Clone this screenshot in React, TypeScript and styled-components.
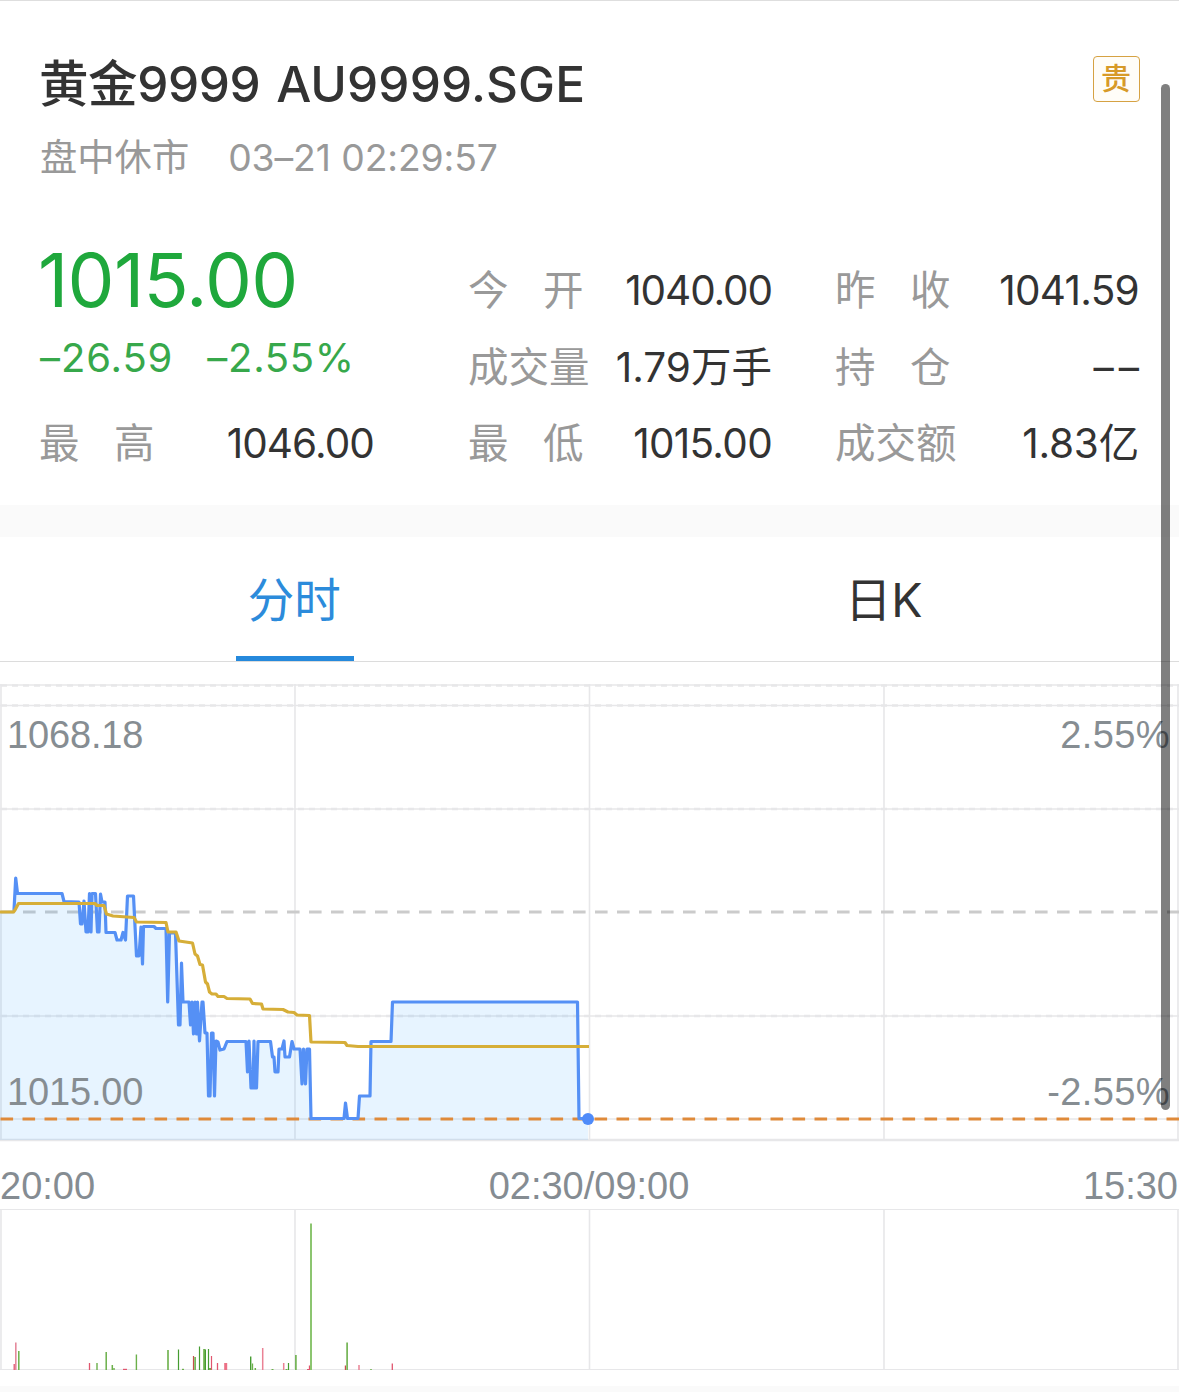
import React from "react";
import styled, { createGlobalStyle } from "styled-components";

const GlobalStyle = createGlobalStyle`
  * { box-sizing: border-box; }
  html, body { margin: 0; padding: 0; background: #fff; overflow: hidden; }
`;

const Page = styled.main`
  position: relative;
  width: 1179px;
  height: 1392px;
  overflow: hidden;
  background: #fff;
  border-top: 1px solid #dedede;
  font-family: Inter, "Noto Sans CJK SC", sans-serif;
  color: #333;
  display: flex;
  flex-direction: column;
`;

const Header = styled.header`
  display: flex;
  justify-content: space-between;
  align-items: flex-start;
  height: 219px;
  padding: 55px 39px 0 40px;
`;

const Title = styled.h1`
  margin: 0 0 0 -1px;
  height: 56px;
  line-height: 57px;
  font-size: 49.5px;
  font-weight: 500;
  letter-spacing: -0.4px;
  white-space: pre;
`;

const Ticker = styled.span`
  margin-left: 3px;
  letter-spacing: 0.1px;
`;

const Status = styled.div`
  display: flex;
  gap: 39px;
  margin-top: 18px;
  height: 56px;
  line-height: 56px;
  font-size: 37.3px;
  color: #999;
  white-space: pre;
`;

const StatusTime = styled.span`
  letter-spacing: -0.1px;
`;

const Badge = styled.span`
  display: flex;
  align-items: center;
  justify-content: center;
  width: 47px;
  height: 46px;
  padding: 0 1px 2px 0;
  border: 1.5px solid #d6a243;
  border-radius: 4px;
  background: #fffdf8;
  color: #d79a28;
  font-size: 30px;
  font-weight: 500;
  line-height: 1;
`;

const Quote = styled.section`
  display: grid;
  grid-template-columns: 429px 367px 303px;
  height: 285px;
  padding: 33px 39px 0 40px;
`;

const Column = styled.div<{ $width: number }>`
  display: flex;
  flex-direction: column;
  width: ${(p) => p.$width}px;
`;

const Price = styled.div`
  height: 56px;
  line-height: 54px;
  margin-left: -2px;
  font-size: 74.5px;
  letter-spacing: -0.7px;
  color: #1fa83c;
`;

const Changes = styled.div`
  display: flex;
  gap: 34px;
  height: 50px;
  line-height: 50px;
  margin-top: 24px;
  margin-bottom: 23px;
  font-size: 40px;
  color: #37a84b;
`;

const Change = styled.span<{ $track: number }>`
  letter-spacing: ${(p) => p.$track}px;
`;

const Stat = styled.div`
  display: flex;
  justify-content: space-between;
  height: 76.5px;
  line-height: 76.5px;
  font-size: 40.5px;
`;

const StatLabel = styled.span<{ $spread: boolean }>`
  color: #999;
  margin-left: -1px;
  letter-spacing: ${(p) => (p.$spread ? "34.5px" : "0")};
`;

const StatValue = styled.span<{ $track: number }>`
  letter-spacing: ${(p) => p.$track}px;
  margin-right: ${(p) => Math.min(0, -p.$track)}px;
`;

const Divider = styled.div<{ $height: number }>`
  flex: none;
  height: ${(p) => p.$height}px;
  background: #fafafa;
`;

const Tabs = styled.nav`
  display: grid;
  grid-template-columns: 1fr 1fr;
  height: 125px;
  border-bottom: 1px solid #dcdcdc;
`;

const Tab = styled.button<{ $active?: boolean }>`
  display: flex;
  justify-content: center;
  background: none;
  border: 0;
  padding: 0;
  font: inherit;
  font-size: 46.5px;
  line-height: 126px;
  color: ${(p) => (p.$active ? "#2c8bdb" : "#333")};

  span {
    display: block;
    min-width: 118px;
    height: 124px;
    padding-right: 1px;
    border-bottom: 5px solid ${(p) => (p.$active ? "#2589dc" : "transparent")};
  }
`;

const Chart = styled.svg`
  display: block;
  flex: none;
  font-family: "Liberation Sans", Arial, sans-serif;
  font-size: 38px;
`;

const Axis = styled.div`
  display: grid;
  grid-template-columns: 1fr auto 1fr;
  height: 48px;
  padding-right: 1px;
  line-height: 53px;
  font-family: "Liberation Sans", Arial, sans-serif;
  font-size: 38px;
  color: #858c92;

  span:last-child { text-align: right; }
`;

const Gap = styled.div`
  flex: none;
  height: 15px;
`;

const Scrollbar = styled.div`
  position: absolute;
  right: 9px;
  top: 83px;
  width: 9px;
  height: 1026px;
  border-radius: 5px;
  background: rgba(0, 0, 0, 0.5);
`;

type StatItem = { label: string; value: string; track: number };

const high: StatItem = { label: "最高", value: "1046.00", track: -0.9 };
const middle: StatItem[] = [
  { label: "今开", value: "1040.00", track: -1.1 },
  { label: "成交量", value: "1.79万手", track: 0 },
  { label: "最低", value: "1015.00", track: -0.7 },
];
const right: StatItem[] = [
  { label: "昨收", value: "1041.59", track: -0.7 },
  { label: "持仓", value: "––", track: 5 },
  { label: "成交额", value: "1.83亿", track: -0.2 },
];

const priceLine =
  "14,910 15.7,878 17.5,893.5 62,893.5 64,901.5 79,902 80.5,924 82,924 84,901 86,932 88,932 89.5,893.5 91,932 92,893.5 95.5,893.5 97.5,932 99,932 100.5,894 102,902 105,902 106,932.5 115,932.5 117,940 121,940 123,932.5 125.5,940 127.5,896 133.5,896 136.5,956 139,956 141,927 142.5,964 143.5,926.5 154,926.5 156,928.5 166,928.5 167.7,1002 169.5,933 175.5,933 178.5,1025 180,1025 181.5,963 183,1002 189,1002 190.5,1025 192,1002 193.5,1034 195,1002 196.5,1034 197.5,1002 199.5,1041 202,1002 203,1002 205,1033 207,1033 208.5,1096 210,1096 211.5,1033 213,1033 214.5,1096 216,1041 218,1042 220,1050 224,1049 227,1041.5 246,1041.5 247.5,1072 249,1041 251,1088 253,1088 254,1041 255,1088 256.5,1088 258,1041.5 270.5,1041.5 272.5,1057 274,1057 275,1072 278,1072 279,1049 282,1049 284,1041 285,1057 289.5,1057 292,1041.5 294,1049 300,1049 302,1084 303.5,1049 305.5,1084 307,1049 309.5,1049 311,1118.5 344,1118.5 345.5,1103 347.5,1118.5 358,1118.5 359.5,1096 370,1096 371,1041.5 391,1041.5 392.5,1002 577.5,1002 579,1118.5 588,1118.5";

const averageLine =
  "0,912 13.5,912 15,910 18.5,903.5 95,903.5 97,905.5 104,905.5 106.5,914 113,916 134,917.5 136.5,922 166,922.5 168,932 176,932 179,941 192.5,943 195,954 197.5,956 200,964.5 202.5,965 205.5,982 207.5,984 209.5,992 212,994 216,994 218,996.5 224,996.5 227,998.5 250,999 252.5,1003.5 261.5,1004 263,1009 283,1009.5 288,1012 294,1012.5 297,1015 309.5,1015.5 311,1042 345,1042.5 347,1045.5 358,1046.5 589,1046.5";

const RED = "#e0566f";
const GREEN = "#6bb04a";

// x centre, top, width, colour
const volumes: [number, number, number, string][] = [
  [14.2, 1364, 1.3, RED], [15.8, 1342.5, 1.6, "#e58a9c"], [18.8, 1351, 1.5, GREEN],
  [89.5, 1363, 1.3, RED], [97, 1363, 1.4, GREEN], [106.2, 1352, 1.5, GREEN],
  [112.3, 1365, 1.5, GREEN], [114, 1368, 1.4, GREEN], [125, 1368.8, 4, RED],
  [136.4, 1354.5, 1.4, GREEN], [168, 1350, 1.6, GREEN], [178.5, 1349.5, 1.2, "#459c31"],
  [183, 1368.8, 2, GREEN], [193.5, 1356, 1.2, "#c64e4e"], [195.1, 1357, 1.6, GREEN],
  [199.5, 1346.5, 1.2, "#459c31"], [204.2, 1349, 2, GREEN], [205.5, 1349.5, 1, "#459c31"],
  [208.5, 1349, 1.2, "#459c31"], [210, 1368, 2, GREEN], [211.5, 1356, 1.2, RED],
  [217.5, 1363, 1.3, RED], [225.7, 1363, 3, "#ec7186"], [250.7, 1356.5, 1.4, "#459c31"],
  [252.5, 1363.5, 1.3, GREEN], [255.3, 1368, 1.5, GREEN], [262.7, 1348, 1.5, "#ea8295"],
  [272.5, 1369, 2, GREEN], [283.7, 1363, 1.5, "#ea8295"], [286.5, 1369, 2, GREEN],
  [288.5, 1363, 1.2, "#459c31"], [295.9, 1355, 1.6, GREEN], [308, 1369, 2, RED],
  [309.5, 1365.5, 1.3, RED], [311, 1223.5, 1.8, "#80bf61"], [345.4, 1365.5, 1.2, "#c64e4e"],
  [347.1, 1342.5, 1.6, GREEN], [359, 1365, 1.5, "#ea8295"], [371, 1369, 1.5, GREEN],
  [392.3, 1363.5, 1.3, RED],
];

const columnsX = [1, 295, 589.5, 884, 1178];

function StatRow({ label, value, track }: StatItem) {
  return (
    <Stat>
      <StatLabel $spread={label.length === 2}>{label}</StatLabel>
      <StatValue $track={track}>{value}</StatValue>
    </Stat>
  );
}

function PriceChart() {
  return (
    <Chart width="1179" height="498" viewBox="0 662 1179 498">
      <g stroke="#e7e7e9" fill="none">
        {columnsX.map((x) => (
          <line key={x} x1={x} x2={x} y1="684" y2="1141" strokeWidth="1.6" />
        ))}
        {[685, 705.5, 809, 1016, 1119].map((y) => (
          <line key={y} x1="0" x2="1179" y1={y} y2={y} strokeWidth="1.5" />
        ))}
        {[685.5, 705.5, 809, 1016].map((y) => (
          <line key={y} x1="1" x2="1179" y1={y} y2={y} strokeWidth="2.4" strokeDasharray="6 5" />
        ))}
        <line x1="0" x2="1179" y1="1140" y2="1140" strokeWidth="2.6" />
      </g>
      <line x1="1" x2="1179" y1="912" y2="912" stroke="#cbcbcb" strokeWidth="3" strokeDasharray="12.6 9.4" />
      <polygon points={`0,1140 0,912 ${priceLine} 588,1140`} fill="rgba(45,155,255,0.115)" />
      <line x1="0.5" x2="1179" y1="1119" y2="1119" stroke="#df8a3a" strokeWidth="3" strokeDasharray="12.6 9.4" />
      <polyline points={priceLine} fill="none" stroke="#5590f5" strokeWidth="3.2" strokeLinejoin="round" strokeLinecap="round" />
      <polyline points={averageLine} fill="none" stroke="#d6ae38" strokeWidth="3.2" strokeLinejoin="round" />
      <circle cx="588" cy="1119" r="6" fill="#4f8bf9" />
      <g fill="#868d92">
        <text x="7" y="748" letterSpacing="-0.15">1068.18</text>
        <text x="7" y="1105" letterSpacing="-0.15">1015.00</text>
        <text x="1170" y="748" textAnchor="end" letterSpacing="0.4">2.55%</text>
        <text x="1170" y="1105" textAnchor="end" letterSpacing="0.4">-2.55%</text>
      </g>
    </Chart>
  );
}

function VolumeChart() {
  return (
    <Chart width="1179" height="163" viewBox="0 1208 1179 163">
      <g stroke="#e7e7e9" strokeWidth="1.6">
        {columnsX.map((x) => (
          <line key={x} x1={x} x2={x} y1="1209" y2="1370" />
        ))}
        <line x1="0" x2="1179" y1="1209.5" y2="1209.5" strokeWidth="1.2" />
        <line x1="0" x2="1179" y1="1369.5" y2="1369.5" strokeWidth="1.2" />
      </g>
      {volumes.map(([x, top, width, color]) => (
        <rect key={x} x={x - width / 2} y={top} width={width} height={1370 - top} fill={color} />
      ))}
    </Chart>
  );
}

export default function App() {
  return (
    <>
      <GlobalStyle />
      <Page>
        <Header>
          <div>
            <Title>黄金9999 <Ticker>AU9999.SGE</Ticker></Title>
            <Status>
              <span>盘中休市</span>
              <StatusTime>03–21 02:29:57</StatusTime>
            </Status>
          </div>
          <Badge>贵</Badge>
        </Header>
        <Quote>
          <Column $width={334}>
            <Price>1015.00</Price>
            <Changes>
              <Change $track={0.9}>–26.59</Change>
              <Change $track={0.7}>–2.55%</Change>
            </Changes>
            <StatRow {...high} />
          </Column>
          <Column $width={303}>
            {middle.map((s) => <StatRow key={s.label} {...s} />)}
          </Column>
          <Column $width={303}>
            {right.map((s) => <StatRow key={s.label} {...s} />)}
          </Column>
        </Quote>
        <Divider $height={32} />
        <Tabs>
          <Tab $active><span>分时</span></Tab>
          <Tab><span>日K</span></Tab>
        </Tabs>
        <PriceChart />
        <Axis>
          <span>20:00</span>
          <span>02:30/09:00</span>
          <span>15:30</span>
        </Axis>
        <VolumeChart />
        <Gap />
        <Divider $height={6} />
        <Scrollbar />
      </Page>
    </>
  );
}
